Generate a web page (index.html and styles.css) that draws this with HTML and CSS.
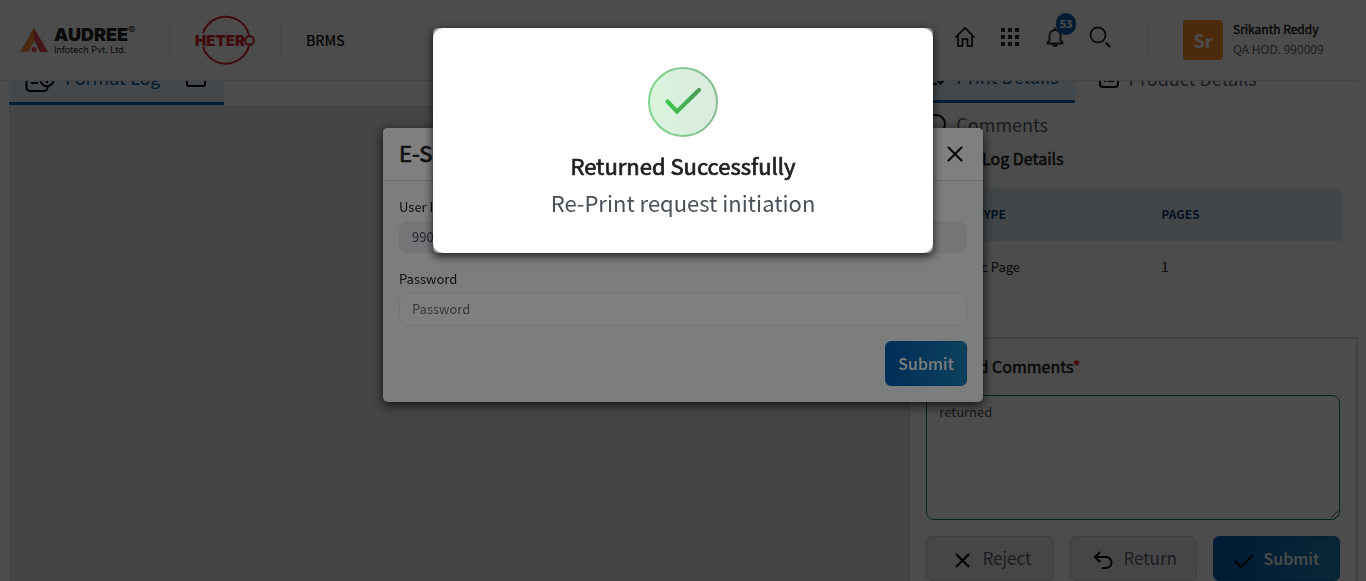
FILE: index.html
```html
<!DOCTYPE html>
<html lang="en">
<head>
<meta charset="utf-8">
<title>BRMS</title>
<meta name="viewport" content="width=device-width, initial-scale=1">
<link rel="stylesheet" href="styles.css">
</head>
<body>
<div class="page">
  <header class="topbar">
    <div class="brand">
      <svg class="brand-mark" viewBox="0 0 28 24" role="img" aria-label="Audree logo"><path d="M14 0 0 24h8l6-11z" fill="#f68b35"/><path d="M14 0v12l6 12h8z" fill="#e5485c"/><path d="M14 0 6 14l3 9 5-11z" fill="#f68b35"/><circle cx="14" cy="21.500" r="2.500" fill="#e5485c"/></svg>
      <div class="brand-text"><span class="brand-name">AUDREE<sup class="brand-reg">®</sup></span><span class="brand-sub">Infotech Pvt. Ltd.</span></div>
    </div>
    <span class="rule"></span>
    <svg class="hetero" viewBox="0 0 60 50" role="img" aria-label="Hetero"><path d="M8 18A24 24 0 0 1 54 20M8 32A24 24 0 0 0 54 31" fill="none" stroke="#d81e2e" stroke-width="2"/><text x="0" y="31" class="hetero-text">HETER</text><circle cx="54.500" cy="25.500" r="4.300" fill="none" stroke="#d81e2e" stroke-width="2.200"/></svg>
    <span class="rule"></span>
    <span class="app-name">BRMS</span>
    <nav class="tools">
      <button class="tool" aria-label="Home"><svg viewBox="0 0 24 24"><path d="M2.500 12.500 12 3l9.500 9.500M5 10.500V21h4.500v-7h5v7H19V10.500" fill="none" stroke="#000" stroke-width="1.600"/></svg></button>
      <button class="tool" aria-label="Apps"><svg viewBox="0 0 24 24"><path d="M3 3h4v4H3zm7 0h4v4h-4zm7 0h4v4h-4zM3 10h4v4H3zm7 0h4v4h-4zm7 0h4v4h-4zM3 17h4v4H3zm7 0h4v4h-4zm7 0h4v4h-4z" fill="#2b2b2b"/></svg></button>
      <button class="tool" aria-label="Notifications"><svg viewBox="0 0 24 24"><path d="M4.500 18.500v-1l2-2V10.500a5.500 5.500 0 0 1 11 0v5l2 2v1zM10 19a2 2 0 0 0 4 0M12 5V2.500" fill="none" stroke="#2b2b2b" stroke-width="1.900" stroke-linejoin="round"/></svg><span class="badge">53</span></button>
      <button class="tool" aria-label="Search"><svg viewBox="0 0 24 24"><circle cx="10" cy="10" r="7.500" fill="none" stroke="#2b2b2b" stroke-width="1.800"/><path d="m17.500 17.500 4.500 4.500" stroke="#2b2b2b" stroke-width="2.400"/></svg></button>
    </nav>
    <span class="rule"></span>
    <div class="user">
      <span class="avatar">Sr</span>
      <div class="user-text"><span class="user-name">Srikanth Reddy</span><span class="user-role">QA HOD. 990009</span></div>
    </div>
  </header>

  <main class="workspace">
    <section class="viewer">
      <div class="tabs">
        <a href="#log" class="tab tab-log active"><svg class="tab-icon wide" viewBox="0 0 30 28"><path d="M12 3H5a3.500 3.500 0 0 0-3.500 3.500v16A3.500 3.500 0 0 0 5 26h14a3.500 3.500 0 0 0 3.500-3.500v-1M6 10h7M6 14h7M6 18h7" /><circle cx="22" cy="14.500" r="6.700"/><path d="M22 11v7M18.500 14.500h7"/></svg><span>Format Log</span><svg class="tab-icon box" viewBox="0 0 20 20"><rect x="1" y="1" width="18" height="18" rx="2"/></svg></a>
      </div>
      <div class="canvas"></div>
    </section>

    <aside class="side">
      <div class="details">
        <div class="tabs side-tabs">
          <a href="#print" class="tab active"><svg class="tab-icon" viewBox="0 0 20 20"><path d="M18 7V4a3 3 0 0 0-3-3H4a3 3 0 0 0-3 3v11a3 3 0 0 0 3 3h7"/><path d="m12 15 2.500 2.500 5-5"/></svg><span>Print Details</span></a>
          <a href="#product" class="tab"><svg class="tab-icon" viewBox="0 0 20 20"><rect x="1" y="1" width="18" height="18" rx="3"/><path d="M5 13h2M9 13h6M5 8h2M9 8h6"/></svg><span>Product Details</span></a>
          <a href="#comments" class="tab tab-low"><svg class="tab-icon" viewBox="0 0 20 20"><path d="M1 19v-9a9 9 0 1 1 9 9z"/></svg><span>Comments</span></a>
        </div>
        <h2 class="heading">Format Log Details</h2>
        <table class="log-table">
          <thead><tr><th>LOG TYPE</th><th>PAGES</th></tr></thead>
          <tbody><tr><td>Generic Page</td><td>1</td></tr></tbody>
        </table>
      </div>
      <form class="comment-panel">
        <label class="heading" for="comment">Detailed Comments<span class="star">*</span></label>
        <textarea id="comment" class="comment-box">returned</textarea>
        <div class="actions">
          <button type="button" class="btn btn-plain"><svg class="btn-icon" viewBox="0 0 20 20"><path d="m4 4 13 13M17 4 4 17"/></svg>Reject</button>
          <button type="button" class="btn btn-plain"><svg class="btn-icon" viewBox="0 0 20 20"><path d="M7 2 2 7l5 5M2 7h11a5.500 5.500 0 0 1 0 11H9"/></svg>Return</button>
          <button type="button" class="btn btn-primary"><svg class="btn-icon" viewBox="0 0 20 20"><path d="m1 11 6 6L19 5"/></svg>Submit</button>
        </div>
      </form>
    </aside>
  </main>
</div>

<div class="overlay overlay-sign">
  <div class="dialog" role="dialog" aria-labelledby="sign-title">
    <div class="dialog-head"><h1 class="dialog-title" id="sign-title">E-Signature</h1><button class="close" aria-label="Close"><svg viewBox="0 0 16 16"><path d="m1.500 1.500 13 13m0-13-13 13" stroke="#000" stroke-width="2" stroke-linecap="round"/></svg></button></div>
    <form class="dialog-body">
      <label class="field-label" for="uid">User ID</label>
      <input class="field" id="uid" value="990009" readonly>
      <label class="field-label second" for="pwd">Password</label>
      <input class="field" id="pwd" type="password" placeholder="Password">
      <div class="dialog-actions"><button type="button" class="btn btn-primary">Submit</button></div>
    </form>
  </div>
</div>

<div class="overlay overlay-alert">
  <div class="alert-frame">
    <div class="alert" role="alertdialog" aria-labelledby="alert-title">
      <svg class="alert-icon" viewBox="0 0 70 70"><defs><linearGradient id="ok" x1="0" x2="1" y1="0" y2="0"><stop offset="0" stop-color="#3fc651"/><stop offset="1" stop-color="#4c9c5c"/></linearGradient><linearGradient id="okfill"><stop offset="0" stop-color="#d9f4dc"/><stop offset="1" stop-color="#dbebdf"/></linearGradient><linearGradient id="okring"><stop offset="0" stop-color="#81d58e"/><stop offset="1" stop-color="#86bd91"/></linearGradient></defs><circle cx="35" cy="35" r="34" fill="url(#okfill)" stroke="url(#okring)" stroke-width="2"/><path d="M19.500 34.500 29 44.500 51 23" fill="none" stroke="url(#ok)" stroke-width="4.200" stroke-linecap="round"/></svg>
      <h1 class="alert-title" id="alert-title">Returned Successfully</h1>
      <p class="alert-text">Re-Print request initiation</p>
    </div>
  </div>
</div>
</body>
</html>
```

FILE: styles.css
```css
* { box-sizing: border-box; }
body {
  margin: 0;
  height: 100vh;
  overflow: hidden;
  font-family: "Noto Sans CJK SC", "Open Sans", sans-serif;
  font-size: 13px;
  line-height: 20px;
  color: #212121;
  background: #fff;
}
h1, h2, p { margin: 0; }
a { text-decoration: none; }
button, input, textarea { font: inherit; }

.page { height: 100vh; padding-right: 8px; display: flex; flex-direction: column; overflow: hidden; }

.topbar {
  position: fixed;
  inset: 0 8px auto 0;
  z-index: 1;
  height: 81px;
  padding: 0 28px 0 20px;
  display: flex;
  align-items: center;
  background: #fff;
  border-bottom: 1px solid #e4e4e4;
}
.brand { display: flex; align-items: center; gap: 6px; width: 149px; }
.brand-mark { width: 28px; height: 24px; }
.brand-text { display: flex; flex-direction: column; color: #222; font-family: Inter, sans-serif; }
.brand-name { font-size: 18px; line-height: 18px; font-weight: 900; white-space: nowrap; }
.brand-reg { font-size: 11px; line-height: 0; font-weight: 600; }
.brand-sub { font-size: 9px; line-height: 11px; }
.rule { width: 1px; height: 35px; background: #e4e4e4; }
.hetero { width: 60px; height: 50px; margin: 0 25px; overflow: visible; }
.hetero-text { font: 900 15px Inter, sans-serif; fill: #d81e2e; }
.app-name { margin-left: 25px; font-size: 14px; font-weight: 500; color: #111; }
.tools { margin-left: auto; margin-right: 35px; display: flex; gap: 21px; padding-bottom: 6px; }
.tool { position: relative; width: 24px; height: 24px; padding: 0; border: 0; background: none; }
.tool svg { display: block; width: 24px; height: 24px; }
.badge { position: absolute; left: 13px; top: -12px; width: 20px; height: 22px; border-radius: 10px; background: #0b5cab; color: #fff; font: 700 11px/22px "Open Sans", sans-serif; text-align: center; }
.user { display: flex; align-items: center; gap: 10px; margin-left: 35px; width: 147px; }
.avatar { width: 40px; height: 40px; border-radius: 4px; background: #fd8f2c; color: #fff; font-size: 18px; line-height: 40px; font-weight: 700; text-align: center; }
.user-text { display: flex; flex-direction: column; font-size: 12px; white-space: nowrap; padding-bottom: 2px; }
.user-name { -webkit-text-stroke: 0.4px currentColor; }
.user-role { color: #666; }

.workspace { flex: 1; display: flex; padding-left: 9px; padding-top: 54px; min-height: 0; }
.viewer { flex: 2; display: flex; flex-direction: column; }
.canvas { flex: 1; background: #e6e6e6; }
.side { flex: 1; display: flex; flex-direction: column; min-width: 0; }
.tabs { display: flex; flex-wrap: wrap; column-gap: 8px; }
.side-tabs { margin-left: -14px; margin-right: -14px; }
.tab { display: flex; align-items: center; gap: 10px; height: 49px; padding: 0 16px 2px; font-size: 18px; color: #5c6370; }
.tab.active { color: #0b5496; background: #e1f2fd; border-bottom: 3px solid #0a68b4; }
.tab-log { height: 51px; width: 215px; padding-right: 18px; }
.tab-low { height: 43px; }
.tab-icon { width: 20px; height: 20px; flex: none; fill: none; stroke: #000; stroke-width: 2; }
.tab-icon.wide { width: 30px; height: 28px; margin-top: 4px; }
.tab-icon.box { margin-left: auto; }

.details { flex: none; height: 283px; padding: 0 16px; }
.heading { font-size: 16px; line-height: 24px; font-weight: 400; color: #212121; -webkit-text-stroke: 0.5px currentColor; }
.log-table { width: 100%; margin-top: 17px; border-collapse: separate; border-spacing: 0; border: 1px solid #f4f4f4; border-radius: 8px; overflow: hidden; }
.log-table th, .log-table td { height: 53px; padding: 0 24px 2px; text-align: left; font-weight: 400; }
.log-table th:first-child { width: 51%; }
.log-table th { background: #dcebf5; color: #0b3f73; font-weight: 700; font-size: 12px; }
.log-table td:first-child { padding-left: 16px; }

.comment-panel { flex: 1 0 auto; border: 2px solid #dadada; padding: 15px 16px 0; display: flex; flex-direction: column; }
.star { color: #e00; }
.comment-box { height: 125px; margin: 17px 0 16px; padding: 6px 12px; border: 1px solid #198735; border-radius: 8px; background: #fff; color: #495057; flex: none; }
.actions { display: grid; grid-template-columns: repeat(3, 1fr); gap: 16px; }
.btn { display: flex; align-items: center; justify-content: center; gap: 10px; height: 45px; padding: 0 12px 2px; border-radius: 6px; font-size: 17px; }
.btn-plain { background: #e9ebee; border: 1px solid #d0d3d8; color: #5c6370; padding-left: 16px; }
.btn-primary { background: linear-gradient(90deg, #005ab0, #1a83b8); border: 1px solid #0a68b4; color: #fff; font-size: 16px; font-weight: 500; }
.btn-icon { width: 20px; height: 20px; margin-top: 4px; flex: none; fill: none; stroke: #000; stroke-width: 2; }

.overlay { position: fixed; inset: 0; display: flex; justify-content: center; align-items: flex-start; }
.overlay-sign { z-index: 2; background: rgba(0, 0, 0, .4); padding-top: 128px; }
.overlay-alert { z-index: 3; background: rgba(0, 0, 0, .5); padding-top: 28px; }
.dialog { width: 600px; max-width: 100%; border-radius: 5px; overflow: hidden; background: #f8fdfb; box-shadow: 0 3px 12px rgba(0, 0, 0, .8); }
.dialog-head { display: flex; align-items: center; justify-content: space-between; height: 53px; padding: 0 20px 0 16px; background: #fff; border-bottom: 1px solid #dee2e6; }
.dialog-title { padding-bottom: 4px; font-size: 22px; font-weight: 400; -webkit-text-stroke: 0.7px currentColor; }
.close { width: 16px; height: 16px; padding: 0; border: 0; background: none; }
.close svg { display: block; }
.dialog-body { padding: 16px; display: flex; flex-direction: column; }
.field-label { margin-bottom: 4px; }
.second { margin-top: 16px; }
.field { height: 32px; padding: 0 12px 2px; border: 1px solid #e9ecef; border-radius: 8px; background: #fff; color: #495057; }
.field::placeholder { color: #6c757d; opacity: 1; }
.field:read-only { background: #ecedf2; }
.dialog-actions { display: flex; justify-content: flex-end; margin-top: 16px; }

.alert-frame { width: 500px; max-width: 100%; border-radius: 5px; background: #999; box-shadow: 0 3px 10px rgba(0, 0, 0, .8); }
.alert { display: flex; flex-direction: column; align-items: center; height: 225px; padding-top: 39px; border-radius: 10px; background: #fff; text-align: center; }
.alert-icon { width: 70px; height: 70px; }
.alert-title { margin-top: 12px; font-size: 22px; line-height: 32px; font-weight: 400; -webkit-text-stroke: 0.7px currentColor; }
.alert-text { margin-top: 5px; font-size: 22px; line-height: 32px; color: #495057; }
```
